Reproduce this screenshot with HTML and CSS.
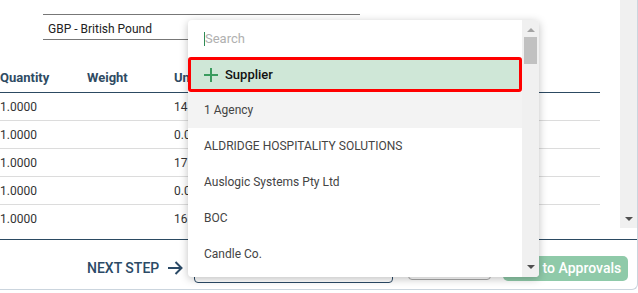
FILE: index.html
```html
<!DOCTYPE html>
<html lang="en">
<head>
    <meta charset="UTF-8">
    <meta name="viewport" content="width=device-width, initial-scale=1.0">
    <title>Purchase Order - Supplier</title>
    <link rel="stylesheet" href="styles.css">
</head>
<body>

    <div class="card">
        <div class="scroll-area">
            <div class="scroll-content">
                <!-- Currency field -->
                <div class="field-above"></div>
                <div class="currency-select">GBP - British Pound</div>

                <!-- Order lines -->
                <div class="lines">
                    <div class="line-row line-head">
                        <div class="cell">Quantity</div>
                        <div class="cell">Weight</div>
                        <div class="cell">Unit Price</div>
                    </div>
                    <div class="line-row">
                        <div class="cell">1.0000</div>
                        <div class="cell"></div>
                        <div class="cell">14.5000</div>
                    </div>
                    <div class="line-row">
                        <div class="cell">1.0000</div>
                        <div class="cell"></div>
                        <div class="cell">0.0000</div>
                    </div>
                    <div class="line-row">
                        <div class="cell">1.0000</div>
                        <div class="cell"></div>
                        <div class="cell">17.2000</div>
                    </div>
                    <div class="line-row">
                        <div class="cell">1.0000</div>
                        <div class="cell"></div>
                        <div class="cell">0.0000</div>
                    </div>
                    <div class="line-row">
                        <div class="cell">1.0000</div>
                        <div class="cell"></div>
                        <div class="cell">16.8000</div>
                    </div>
                </div>
            </div>
            <div class="vscroll">
                <span class="arrow-down dark"></span>
            </div>
        </div>

        <div class="footer-gap"></div>

        <div class="footer">
            <div class="next-step">NEXT STEP</div>
            <svg class="next-arrow" width="16" height="14" viewBox="0 0 16 14">
                <path d="M1 7 H14.5 M8.5 1 L14.5 7 L8.5 13" fill="none" stroke="#2b4a66" stroke-width="2"/>
            </svg>
            <div class="supplier-input"></div>
            <button class="btn-plain">Save Draft</button>
            <button class="btn-approve">Send to Approvals</button>
        </div>
    </div>

    <!-- Supplier dropdown -->
    <div class="dropdown">
        <div class="dropdown-list">
            <div class="dropdown-search"><span class="caret"></span>Search</div>
            <div class="dropdown-add">
                <svg width="14" height="14" viewBox="0 0 14 14">
                    <path d="M7 0 V14 M0 7 H14" stroke="#3a9c5e" stroke-width="2"/>
                </svg>
                <span>Supplier</span>
            </div>
            <div class="dropdown-item hover">1 Agency</div>
            <div class="dropdown-item">ALDRIDGE HOSPITALITY SOLUTIONS</div>
            <div class="dropdown-item">Auslogic Systems Pty Ltd</div>
            <div class="dropdown-item">BOC</div>
            <div class="dropdown-item">Candle Co.</div>
        </div>
        <div class="dropdown-scroll">
            <span class="arrow-up"></span>
            <span class="thumb"></span>
            <span class="spacer"></span>
            <span class="arrow-down dark"></span>
        </div>
    </div>

</body>
</html>
```

FILE: styles.css
```css
/* Page and card */
body {
    margin: 0;
    background-color: #fff;
    font-family: 'Roboto', 'Liberation Sans', sans-serif;
    width: 638px;
    height: 293px;
    overflow: hidden;
    position: relative;
}

.card {
    width: 638px;
    height: 290px;
    box-sizing: border-box;
    border-right: 1px solid #cbd5de;
    border-bottom: 1px solid #cbd5de;
    border-bottom-right-radius: 6px;
    display: flex;
    flex-direction: column;
    overflow: hidden;
}

.scroll-area {
    height: 228px;
    display: flex;
    flex-shrink: 0;
}

.scroll-content {
    flex: 1;
    padding-right: 20px;
    overflow: hidden;
}

.vscroll {
    width: 17px;
    background-color: #f0f0f0;
    display: flex;
    flex-direction: column;
    justify-content: flex-end;
    align-items: center;
    padding-bottom: 7px;
    box-sizing: border-box;
}

/* Scrollbar arrows */
.arrow-up, .arrow-down {
    width: 0;
    height: 0;
    border-left: 4px solid transparent;
    border-right: 4px solid transparent;
}

.arrow-up {
    border-bottom: 4px solid #a3a3a3;
}

.arrow-down {
    border-top: 4px solid #a3a3a3;
}

.arrow-down.dark {
    border-top-color: #505050;
}

/* Currency */
.field-above {
    margin-left: 43px;
    width: 317px;
    height: 14px;
    border-bottom: 1px solid #777;
}

.currency-select {
    margin-left: 43px;
    width: 300px;
    height: 25px;
    box-sizing: border-box;
    padding: 7px 0 0 5px;
    font-size: 12px;
    color: #222;
    border-bottom: 1px solid #777;
}

/* Lines table */
.lines {
    margin-top: 22px;
}

.line-row {
    display: flex;
    height: 28px;
    box-sizing: border-box;
    align-items: center;
    border-bottom: 1px solid #dcdcdc;
    font-size: 12px;
    color: #333;
}

.line-row.line-head {
    height: 31px;
    border-bottom: 1px solid #2c4a62;
    font-size: 13px;
    font-weight: 700;
    color: #2f4b63;
}

.cell {
    width: 87px;
    white-space: nowrap;
}

/* Footer */
.footer-gap {
    height: 11px;
    flex-shrink: 0;
}

.footer {
    flex: 1;
    border-top: 1px solid #2b4a62;
    display: flex;
    align-items: center;
    padding: 7px 0 0 87px;
    box-sizing: border-box;
}

.next-step {
    font-size: 14px;
    font-weight: 500;
    color: #2b4a66;
}

.next-arrow {
    margin-left: 8px;
}

.supplier-input {
    width: 199px;
    height: 30px;
    box-sizing: border-box;
    margin-left: 11px;
    border: 1px solid #2b4a66;
    border-radius: 4px;
}

.btn-plain {
    width: 83px;
    height: 24px;
    margin-left: 15px;
    border: 1px solid #aaa;
    border-radius: 4px;
    background-color: #fff;
    color: #666;
    font-family: inherit;
    font-size: 13px;
}

.btn-approve {
    width: 125px;
    height: 25px;
    margin-left: 12px;
    border: none;
    border-radius: 5px;
    background-color: #8fcaa9;
    color: #fff;
    font-family: inherit;
    font-size: 14px;
    font-weight: 500;
    display: flex;
    align-items: center;
    justify-content: flex-end;
    padding: 0 7px 0 0;
    white-space: nowrap;
    overflow: hidden;
}

/* Dropdown */
.dropdown {
    position: absolute;
    left: 188px;
    top: 20px;
    width: 351px;
    height: 257px;
    background-color: #fff;
    border-radius: 4px;
    box-shadow: 0 2px 8px rgba(0, 0, 0, 0.25);
    display: flex;
    overflow: hidden;
}

.dropdown-list {
    flex: 1;
}

.dropdown-search {
    height: 37px;
    display: flex;
    align-items: center;
    padding-left: 16px;
    font-size: 13px;
    color: #b0b0b0;
}

.caret {
    width: 1px;
    height: 14px;
    background-color: #2e8b57;
}

.dropdown-add {
    height: 35px;
    box-sizing: border-box;
    border: 3px solid #f00;
    border-radius: 3px;
    background-color: #cfe7d7;
    display: flex;
    align-items: center;
    padding-left: 13px;
    gap: 7px;
    font-size: 13px;
    font-weight: 500;
    color: #111;
}

.dropdown-item {
    height: 36px;
    display: flex;
    align-items: center;
    padding-left: 16px;
    font-size: 12px;
    color: #444;
    white-space: nowrap;
}

.dropdown-item.hover {
    background-color: #f3f3f3;
}

.dropdown-scroll {
    width: 17px;
    background-color: #f0f0f0;
    display: flex;
    flex-direction: column;
    align-items: center;
    padding: 8px 0 8px;
    box-sizing: border-box;
}

.dropdown-scroll .thumb {
    width: 13px;
    height: 27px;
    margin-top: 5px;
    background-color: #c1c1c1;
}

.dropdown-scroll .spacer {
    flex: 1;
}
```
